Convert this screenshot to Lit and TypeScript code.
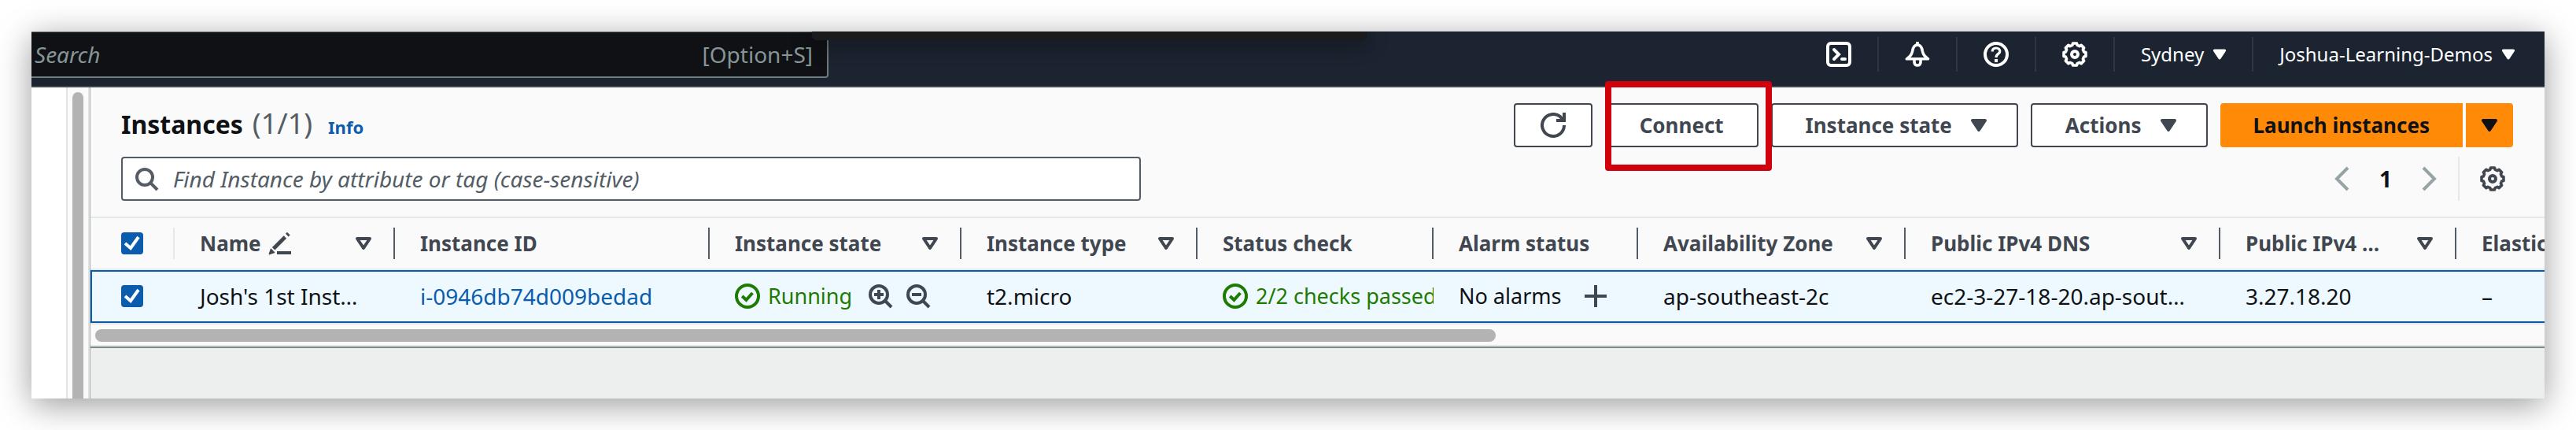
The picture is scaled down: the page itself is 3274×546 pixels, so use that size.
import { LitElement, html, css, svg, nothing } from "lit";
import { customElement } from "lit/decorators.js";

const gearPath = (() => {
  const point = (radius: number, degrees: number) => {
    const a = (degrees * Math.PI) / 180;
    return `${(8 + radius * Math.cos(a)).toFixed(2)} ${(8 + radius * Math.sin(a)).toFixed(2)}`;
  };
  const points: string[] = [];
  for (let i = 0; i < 8; i++) {
    const a = i * 45;
    points.push(point(6, a - 15), point(7.1, a - 10), point(7.1, a + 10), point(6, a + 15));
  }
  return `M${points.join("L")}Z`;
})();

const shapes = {
  shell: svg`<rect x="1" y="1" width="14" height="14" rx="2"/><path d="M5 5l3 3-3 3" stroke-linecap="round"/><path d="M10 11h2" stroke-linecap="round"/>`,
  bell: svg`<path d="M1.200 10.900h13.600C12.600 9.200 11.700 8.400 11.200 6C10.800 3.500 9.800 2 8 2S5.200 3.500 4.800 6C4.300 8.400 3.400 9.200 1.200 10.900Z" stroke-width="1.800" stroke-linejoin="round"/><path d="M8 0v2M6 11v2c0 1.200.8 2 2 2s2-.8 2-2v-2" stroke-width="1.800"/>`,
  help: svg`<circle cx="8" cy="8" r="7"/><path d="M5.600 6.200C5.600 4.800 6.600 4 8 4s2.400.8 2.400 2.100C10.400 7.800 8 7.600 8 10" stroke-width="1.600"/><path d="M8 11v2"/>`,
  gear: svg`<path d=${gearPath} stroke-width="1.800" stroke-linejoin="round"/><circle cx="8" cy="8" r="2"/>`,
  refresh: svg`<path d="M15 8a7 7 0 1 1-2.200-5.100L14.500 5"/><path d="M15 0v5h-5"/>`,
  search: svg`<circle cx="7" cy="7" r="5"/><path d="M10.700 10.700L15 15"/>`,
  zoomIn: svg`<circle cx="7" cy="7" r="5.500"/><path d="M11 11l4 4M7 4v6M4 7h6"/>`,
  zoomOut: svg`<circle cx="7" cy="7" r="5.500"/><path d="M11 11l4 4M4 7h6"/>`,
  check: svg`<circle cx="8" cy="8" r="7"/><path d="M4.600 8l2.600 2.400 4-4.400"/>`,
  plus: svg`<path d="M8 1v14M1 8h14"/>`,
  prev: svg`<path d="M11 1L4 8l7 7"/>`,
  next: svg`<path d="M5 1l7 7-7 7"/>`,
  caret: svg`<path d="M4 5h8l-4 6z" fill="currentColor" stroke-linejoin="round"/>`,
  sort: svg`<path d="M4 5h8l-4 6z" stroke-linejoin="round"/>`,
  edit: svg`<path d="M6 14h9"/><path d="M3.800 11.400L11.200 4" stroke-width="2.400"/><path d="M12.400 2.800l1-1" stroke-width="2.600"/><path d="M1.200 14.800l1-3 2 2z" fill="currentColor" stroke-width="0.800" stroke-linejoin="round"/>`,
};

const icon = (name: keyof typeof shapes, size = "") =>
  html`<svg class="icon ${size}" viewBox="0 0 16 16" aria-hidden="true">${shapes[name]}</svg>`;

const columns = [
  { key: "name", label: "Name", edit: true, sort: true },
  { key: "id", label: "Instance ID" },
  { key: "state", label: "Instance state", sort: true },
  { key: "type", label: "Instance type", sort: true },
  { key: "status", label: "Status check" },
  { key: "alarm", label: "Alarm status" },
  { key: "zone", label: "Availability Zone", sort: true },
  { key: "dns", label: "Public IPv4 DNS", sort: true },
  { key: "ip", label: "Public IPv4 …", sort: true },
  { key: "elastic", label: "Elastic IP" },
];

@customElement("app-root")
export class AppRoot extends LitElement {
  static styles = css`
    :host {
      display: block;
      padding: 40px;
      overflow: hidden;
      background: #fff;
      color: #0f1114;
      font: 28px/36px "Noto Sans", "Open Sans", sans-serif;
    }
    * { box-sizing: border-box; }
    button, input { font: inherit; color: inherit; margin: 0; }
    button { border: 0; background: none; padding: 0; cursor: pointer; }
    a { color: #0b5cad; text-decoration: none; }
    .icon { width: 32px; height: 32px; flex: none; display: block; fill: none; stroke: currentColor; stroke-width: 2; }
    .icon.small { width: 26px; height: 26px; margin: 0 -5px; }

    .window { box-shadow: 0 8px 40px rgba(0, 0, 0, 0.4); background: #fafafa; }
    .topbar {
      position: relative;
      overflow: hidden;
      display: flex;
      justify-content: space-between;
      align-items: flex-start;
      height: 71px;
      background: #1b2430;
      border-bottom: 2px solid #414750;
      color: #fff;
    }
    .tab {
      position: absolute;
      top: 0;
      left: 992px;
      width: 706px;
      height: 11px;
      border-radius: 0 0 6px 6px;
      background: #191b1c;
      box-shadow: 0 4px 24px rgba(10, 10, 16, 0.7);
    }
    .site-search {
      display: flex;
      align-items: center;
      flex: 0 1 1013px;
      height: 59px;
      padding: 0 18px 0 4px;
      background: #0f1114;
      border: 2px solid #6f7c7c;
      border-top-width: 1px;
      border-left: 0;
      border-radius: 0 0 4px 0;
      color: #879596;
    }
    input[type="search"] { flex: 1; min-width: 0; border: 0; padding: 0; background: none; outline: 0; font-style: italic; appearance: none; }
    input::placeholder { color: inherit; opacity: 1; }
    .nav { display: flex; font-size: 24px; padding-top: 7px; }
    .nav button { display: flex; align-items: center; gap: 12px; height: 44px; padding: 0 33px; }
    .nav button + button { border-left: 2px solid #30363d; }
    .nav button:last-child { padding-right: 38px; }

    .body { display: flex; }
    .side { display: flex; flex: none; width: 74px; justify-content: flex-end; background: #fff; }
    .side-track { width: 30px; padding: 6px 6px 0; border-left: 2px solid #e2e2e2; border-right: 2px solid #e2e4e4; background: #fafafa; }
    .side-thumb { height: 100%; border-radius: 8px 8px 0 0; background: #b3b3b3; }
    .main { flex: 1; min-width: 0; border-left: 1px solid #a7b0b0; }
    .head { padding: 20px 40px 20px 39px; border-bottom: 2px solid #e4e9e8; display: grid; gap: 12px; }
    .line { display: flex; justify-content: space-between; align-items: center; height: 56px; }
    .title { display: flex; align-items: baseline; gap: 12px; }
    h1 { margin: 0; font-size: 32px; font-weight: 700; }
    .count { font-size: 36px; font-weight: 400; color: #545d65; }
    .info { font-size: 22px; font-weight: 700; padding-left: 8px; }
    .actions { display: flex; gap: 16px; font-size: 26px; font-weight: 700; color: #414750; }
    .btn {
      display: flex;
      align-items: center;
      justify-content: center;
      gap: 18px;
      height: 56px;
      padding: 0 42px;
      border: 2px solid #414750;
      border-radius: 4px;
      background: #fff;
    }
    .btn.menu { padding-right: 32px; }
    .btn.refresh { padding: 0 32px; }
    .marked { position: relative; display: flex; }
    .marker { position: absolute; inset: -28px -17px -30px 0; border: 8px solid #d1000d; border-radius: 4px; pointer-events: none; }
    .split { display: flex; gap: 4px; color: #0f1114; }
    .split .btn { padding: 0 40px; border-color: #ff8a08; background: #ff8a08; border-radius: 4px 0 0 4px; }
    .split .btn + .btn { padding: 0 12px; border-radius: 0 4px 4px 0; }
    .filter {
      display: flex;
      align-items: center;
      gap: 18px;
      flex: 0 1 1296px;
      height: 56px;
      padding: 0 14px;
      border: 2px solid #545d65;
      border-radius: 4px;
      background: #fff;
      color: #545d65;
    }
    .pager { display: flex; align-items: center; height: 56px; }
    .pager button { color: #95a5a6; }
    .pager .page { width: 76px; text-align: center; font-weight: 700; }
    .pager .prefs { display: flex; align-items: center; height: 56px; margin-left: 22px; padding: 0 10px 0 26px; border-left: 2px solid #e4e9e8; color: #414750; }

    .scroller { overflow: hidden; }
    table { width: 3308px; table-layout: fixed; border-collapse: separate; border-spacing: 0; }
    .c-pick { width: 107px; }
    .c-name { width: 280px; }
    .c-id, .c-dns { width: 400px; }
    .c-state { width: 320px; }
    .c-type, .c-status, .c-ip { width: 300px; }
    .c-alarm { width: 260px; }
    .c-zone { width: 340px; }
    th, td { padding: 0; text-align: left; white-space: nowrap; overflow: hidden; }
    th { height: 66px; border-bottom: 2px solid #e4e9e8; font-size: 26px; font-weight: 700; color: #414750; }
    .th { display: flex; align-items: center; justify-content: space-between; height: 40px; padding: 0 22px 0 32px; border-right: 2px solid #545d65; }
    .label { display: flex; align-items: center; gap: 8px; }
    .pick { display: flex; align-items: center; height: 40px; padding-left: 39px; }
    th .pick { border-right: 2px solid #e4e9e8; }
    td { height: 67px; padding-bottom: 2px; background: #eef9ff; border: solid #0b5cad; border-width: 2px 0; }
    td:first-child { border-left-width: 2px; }
    td .pick { padding-left: 37px; }
    .cell { display: flex; align-items: center; padding-left: 32px; }
    .tight { font-size: 27px; }
    .ok { color: #1d7b00; gap: 10px; }
    .tools { display: flex; gap: 16px; margin-left: 10px; color: #414750; }
    .add { margin-left: 28px; color: #414750; }
    input[type="checkbox"] {
      appearance: none;
      width: 28px;
      height: 28px;
      border: 2px solid #7d8998;
      border-radius: 4px;
      background: #fff;
    }
    input[type="checkbox"]:checked {
      border: 0;
      background: #0b5cad url("data:image/svg+xml,%3Csvg xmlns='http://www.w3.org/2000/svg' viewBox='0 0 28 28' fill='none' stroke='white' stroke-width='4'%3E%3Cpath d='M5 14l7 6L22 6'/%3E%3C/svg%3E");
    }
    .track { padding: 6px; height: 30px; border-top: 2px solid #e2e4e4; border-bottom: 2px solid #e4e9e8; }
    .thumb { width: 57.300%; height: 16px; border-radius: 8px; background: #b3b3b3; }
    .panel { height: 66px; border-top: 2px solid #7c8989; background: #edefee; }
  `;

  private cell(key: string) {
    switch (key) {
      case "name": return html`<div class="cell">Josh's 1st Inst…</div>`;
      case "id": return html`<div class="cell"><a href="#instance">i-0946db74d009bedad</a></div>`;
      case "state":
        return html`<div class="cell tight ok">${icon("check")}Running
          <span class="tools">
            <button aria-label="Include Running in filter">${icon("zoomIn")}</button>
            <button aria-label="Exclude Running from filter">${icon("zoomOut")}</button>
          </span></div>`;
      case "type": return html`<div class="cell">t2.micro</div>`;
      case "status": return html`<div class="cell tight ok">${icon("check")}2/2 checks passed</div>`;
      case "alarm":
        return html`<div class="cell tight">No alarms<button class="add" aria-label="Create alarm">${icon("plus")}</button></div>`;
      case "zone": return html`<div class="cell">ap-southeast-2c</div>`;
      case "dns": return html`<div class="cell">ec2-3-27-18-20.ap-sout…</div>`;
      case "ip": return html`<div class="cell">3.27.18.20</div>`;
      default: return html`<div class="cell">–</div>`;
    }
  }

  render() {
    return html`
      <div class="window">
        <header class="topbar">
          <div class="site-search">
            <input type="search" placeholder="Search" aria-label="Search" />
            <span>[Option+S]</span>
          </div>
          <div class="tab"></div>
          <nav class="nav">
            <button aria-label="CloudShell">${icon("shell")}</button>
            <button aria-label="Notifications">${icon("bell")}</button>
            <button aria-label="Help">${icon("help")}</button>
            <button aria-label="Settings">${icon("gear")}</button>
            <button>Sydney ${icon("caret", "small")}</button>
            <button>Joshua-Learning-Demos ${icon("caret", "small")}</button>
          </nav>
        </header>
        <div class="body">
          <aside class="side"><div class="side-track"><div class="side-thumb"></div></div></aside>
          <main class="main">
            <section class="head">
              <div class="line">
                <div class="title">
                  <h1>Instances</h1><span class="count">(1/1)</span><a class="info" href="#info">Info</a>
                </div>
                <div class="actions">
                  <button class="btn refresh" aria-label="Refresh">${icon("refresh")}</button>
                  <div class="marked"><button class="btn">Connect</button><div class="marker"></div></div>
                  <button class="btn menu">Instance state ${icon("caret")}</button>
                  <button class="btn menu">Actions ${icon("caret")}</button>
                  <div class="split">
                    <button class="btn">Launch instances</button>
                    <button class="btn" aria-label="More launch options">${icon("caret")}</button>
                  </div>
                </div>
              </div>
              <div class="line">
                <label class="filter">${icon("search")}
                  <input type="search" placeholder="Find Instance by attribute or tag (case-sensitive)" aria-label="Find Instance" />
                </label>
                <div class="pager">
                  <button aria-label="Previous page">${icon("prev")}</button>
                  <span class="page">1</span>
                  <button aria-label="Next page">${icon("next")}</button>
                  <button class="prefs" aria-label="Preferences">${icon("gear")}</button>
                </div>
              </div>
            </section>
            <div class="scroller">
              <table>
                <colgroup><col class="c-pick" />${columns.map((c) => html`<col class="c-${c.key}" />`)}</colgroup>
                <thead>
                  <tr>
                    <th><div class="pick"><input type="checkbox" checked aria-label="Select all instances" /></div></th>
                    ${columns.map((c) => html`<th scope="col"><div class="th">
                      <span class="label">${c.label}${c.edit ? icon("edit") : nothing}</span>${c.sort ? icon("sort") : nothing}
                    </div></th>`)}
                  </tr>
                </thead>
                <tbody>
                  <tr>
                    <td><div class="pick"><input type="checkbox" checked aria-label="Select Josh's 1st Instance" /></div></td>
                    ${columns.map((c) => html`<td>${this.cell(c.key)}</td>`)}
                  </tr>
                </tbody>
              </table>
            </div>
            <div class="track"><div class="thumb"></div></div>
            <div class="panel"></div>
          </main>
        </div>
      </div>`;
  }
}
